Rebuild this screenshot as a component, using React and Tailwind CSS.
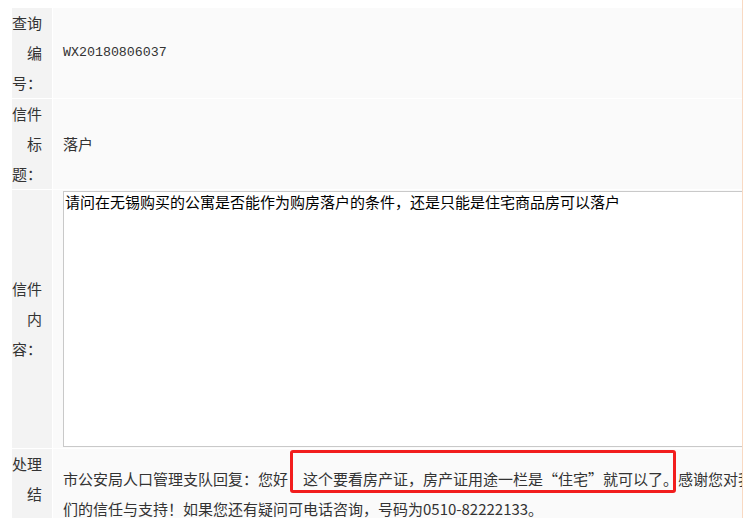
const cjk = "font-['Noto_Sans_CJK_SC','Noto_Sans',sans-serif]"

function Label({ children }) {
  return (
    <div className={`bg-[#f3f3f3] pr-[10px] text-right text-[15px] leading-[30px] text-[#333] flex items-center justify-end ${cjk}`}>
      <span className="block w-[30px] text-right">{children}</span>
    </div>
  )
}

export default function App() {
  return (
    <div className="h-[518px] w-[749px] overflow-hidden bg-white">
      <div className="w-[743px] h-full overflow-hidden border-r border-[#f9d9c2] pt-[8px] pl-[12px]">
        <div className={`grid grid-cols-[40px_720px] gap-px w-[761px] ${cjk}`}>
          {/* 查询编号 */}
          <Label>查询编号：</Label>
          <div className="bg-[#fafafa] px-[10px] flex items-center text-[#333]">
            <span className="font-['Liberation_Mono','DejaVu_Sans_Mono',monospace] text-[13.3px]">WX20180806037</span>
          </div>

          {/* 信件标题 */}
          <Label>信件标题：</Label>
          <div className="bg-[#fafafa] px-[10px] flex items-center text-[15px] text-[#333]">
            落户
          </div>

          {/* 信件内容 */}
          <Label>信件内容：</Label>
          <div className="bg-[#fafafa] px-[10px] py-px">
            <textarea
              readOnly
              className={`block w-[700px] h-[256px] resize-none border border-[#c9c9c9] bg-white px-px py-0 text-[15px] leading-[20px] text-black outline-none ${cjk}`}
              defaultValue="请问在无锡购买的公寓是否能作为购房落户的条件，还是只能是住宅商品房可以落户"
            />
          </div>

          {/* 处理结果 */}
          <Label>处理结果：</Label>
          <div className="relative bg-[#fafafa] px-[10px] flex items-center text-[15px] leading-[30px] text-[#333]">
            <p>
              市公安局人口管理支队回复：您好！这个要看房产证，房产证用途一栏是“住宅”就可以了。感谢您对我们的信任与支持！如果您还有疑问可电话咨询，号码为0510-82222133。
            </p>
            {/* annotation box */}
            <div className="absolute left-[237px] top-px w-[386px] h-[43px] rounded-[3px] border-[3px] border-[#f21d1d]" />
          </div>
        </div>
      </div>
    </div>
  )
}
